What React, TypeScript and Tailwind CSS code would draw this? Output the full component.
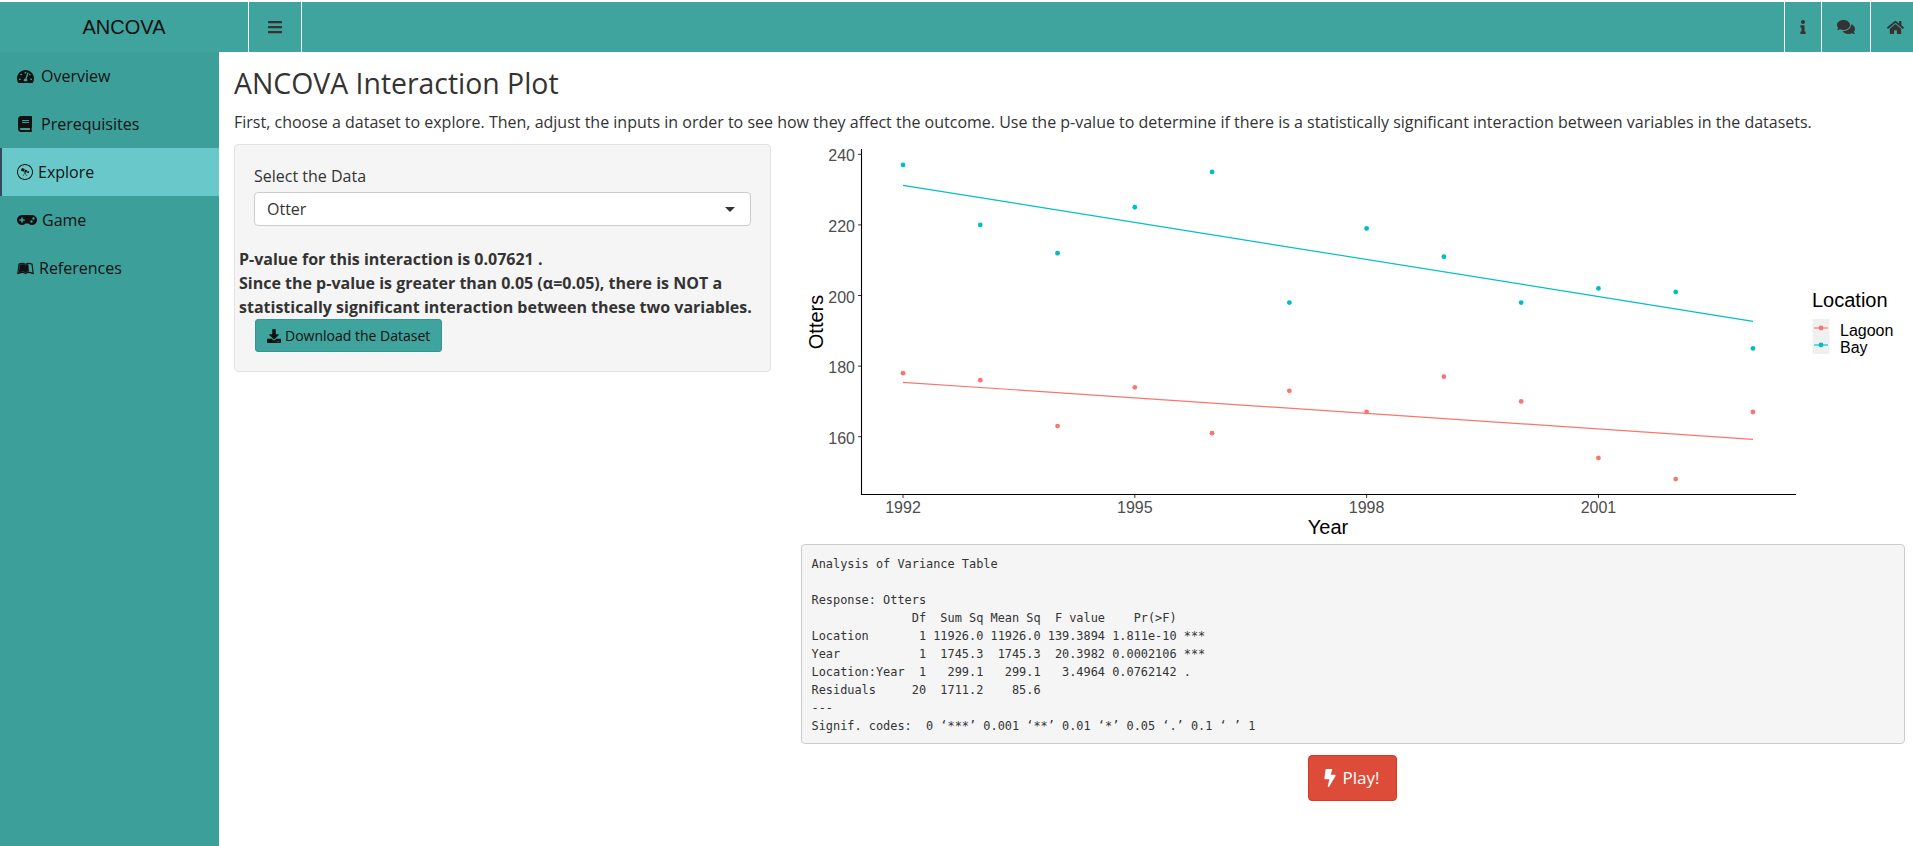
import { FaTachometerAlt, FaBook, FaWpexplorer, FaGamepad, FaLeanpub, FaBars, FaInfo, FaComments, FaHome, FaDownload, FaBolt } from 'react-icons/fa'
import type { ReactNode } from 'react'

const bay = [237, 220, 212, 225, 235, 198, 219, 211, 198, 202, 201, 185]
const lagoon = [178, 176, 163, 174, 161, 173, 167, 177, 170, 154, 148, 167]

const xOf = (year: number) => 903 + (year - 1992) * 77.27
const yOf = (v: number) => 436.7 - (v - 160) * 3.53

const anova = `Analysis of Variance Table

Response: Otters
              Df  Sum Sq Mean Sq  F value    Pr(>F)    
Location       1 11926.0 11926.0 139.3894 1.811e-10 ***
Year           1  1745.3  1745.3  20.3982 0.0002106 ***
Location:Year  1   299.1   299.1   3.4964 0.0762142 .  
Residuals     20  1711.2    85.6                       
---
Signif. codes:  0 ‘***’ 0.001 ‘**’ 0.01 ‘*’ 0.05 ‘.’ 0.1 ‘ ’ 1`

function NavItem({ icon, label, gap, active }: { icon: ReactNode; label: string; gap: string; active?: boolean }) {
  return (
    <div
      className={`flex h-12 items-center text-[16px] text-[#111] ${gap} ${
        active ? 'border-l-2 border-[#34495e] bg-[#69c9ca] pl-[15px]' : 'pl-[17px]'
      }`}
    >
      {icon}
      <span>{label}</span>
    </div>
  )
}

function TopIcon({ width, children }: { width: string; children: ReactNode }) {
  return <div className={`flex h-full items-center justify-center border-l border-white text-[#333] ${width}`}>{children}</div>
}

function Plot() {
  return (
    <svg viewBox="801 144 1104 400" className="block h-[400px] w-[1104px]" fontFamily="'Liberation Sans', sans-serif">
      <path d="M861.5 149V494.5H1796" fill="none" stroke="#000" strokeWidth="1.1" />
      {[160, 180, 200, 220, 240].map((v) => (
        <g key={v}>
          <path d={`M858 ${yOf(v)}H861`} stroke="#333" strokeWidth="1" />
          <text x="855" y={yOf(v) + 7} textAnchor="end" fontSize="16" fill="#4d4d4d">{v}</text>
        </g>
      ))}
      {[1992, 1995, 1998, 2001].map((y) => (
        <g key={y}>
          <path d={`M${xOf(y)} 495V498`} stroke="#333" strokeWidth="1" />
          <text x={xOf(y)} y="512.5" textAnchor="middle" fontSize="16" fill="#4d4d4d">{y}</text>
        </g>
      ))}
      <line x1="903" y1="185.3" x2="1753" y2="321.3" stroke="#00bfc4" strokeWidth="1.2" />
      <line x1="903" y1="382.3" x2="1753" y2="439.3" stroke="#f8766d" strokeWidth="1.2" />
      {bay.map((v, i) => (
        <circle key={i} cx={xOf(1992 + i)} cy={yOf(v)} r="2.4" fill="#00bfc4" />
      ))}
      {lagoon.map((v, i) => (
        <circle key={i} cx={xOf(1992 + i)} cy={yOf(v)} r="2.4" fill="#f8766d" />
      ))}
      <text x="823" y="322" textAnchor="middle" fontSize="20" fill="#000" transform="rotate(-90 823 322)">Otters</text>
      <text x="1328" y="534" textAnchor="middle" fontSize="20" fill="#000">Year</text>
      <text x="1812" y="307" fontSize="20" fill="#000">Location</text>
      <rect x="1812.5" y="319" width="17" height="35" fill="#f0f0f0" />
      <path d="M1814 328H1828" stroke="#f8766d" strokeWidth="1.1" />
      <circle cx="1821" cy="328" r="2.4" fill="#f8766d" />
      <path d="M1814 345H1828" stroke="#00bfc4" strokeWidth="1.1" />
      <circle cx="1821" cy="345" r="2.4" fill="#00bfc4" />
      <text x="1840" y="336" fontSize="16" fill="#000">Lagoon</text>
      <text x="1840" y="353" fontSize="16" fill="#000">Bay</text>
    </svg>
  )
}

export default function App() {
  return (
    <div className="flex h-screen flex-col overflow-hidden bg-white pt-[2px] font-['Open_Sans',sans-serif] text-[16px] text-[#333]">
      <header className="flex h-[50px] shrink-0 items-center bg-[#3fa39e]">
        <div className="w-[248px] text-center font-['Liberation_Sans',sans-serif] text-[20px] text-[#111]">ANCOVA</div>
        <TopIcon width="w-[54px] border-r">
          <FaBars size={16} />
        </TopIcon>
        <div className="flex-1" />
        <TopIcon width="w-[37px]">
          <FaInfo size={14} />
        </TopIcon>
        <TopIcon width="w-[49px]">
          <FaComments size={18} />
        </TopIcon>
        <TopIcon width="w-[43px]">
          <div className="ml-[6px]">
            <FaHome size={17} />
          </div>
        </TopIcon>
      </header>

      <div className="flex min-h-0 flex-1">
        <nav className="w-[219px] shrink-0 bg-[#3d9f9a]">
          <NavItem icon={<FaTachometerAlt size={17} />} label="Overview" gap="gap-[7px]" />
          <NavItem icon={<FaBook size={16} className="mr-px" />} label="Prerequisites" gap="gap-[7px]" />
          <NavItem icon={<FaWpexplorer size={16} />} label="Explore" gap="gap-[5px]" active />
          <NavItem icon={<FaGamepad size={20} />} label="Game" gap="gap-[5px]" />
          <NavItem icon={<FaLeanpub size={17} />} label="References" gap="gap-[5px]" />
        </nav>

        <main className="min-w-0 flex-1 pl-[15px]">
          <h2 className="mt-[15px] text-[28.4px] leading-[33px]">ANCOVA Interaction Plot</h2>
          <p className="mt-[11px] leading-[22px]">
            First, choose a dataset to explore. Then, adjust the inputs in order to see how they affect the outcome. Use the p-value to determine if there is a statistically significant interaction between variables in the datasets.
          </p>

          <div className="mt-[11px] flex items-start">
            <section className="h-[228px] w-[537px] rounded border border-[#e3e3e3] bg-[#f5f5f5] pl-[4px] pr-[14px] pt-[20px]">
              <div className="pl-[15px] pr-[5px]">
                <label className="block leading-[22px]">Select the Data</label>
                <div className="mt-[5px] flex h-[34px] items-center justify-between rounded border border-[#ccc] bg-white pl-[12px] pr-[15px]">
                  <span>Otter</span>
                  <span className="h-0 w-0 border-x-[5px] border-t-[5px] border-x-transparent border-t-[#333]" />
                </div>
              </div>
              <div className="mt-[21px] font-bold leading-[24px]">
                P-value for this interaction is 0.07621 .
                <br />
                Since the p-value is greater than 0.05 (α=0.05), there is NOT a statistically significant interaction between these two variables.
              </div>
              <button className="ml-[16px] flex h-[33px] items-center gap-[4px] rounded-[3px] border border-[#399390] bg-[#3fa39e] px-[11px] text-[14px] text-[#111]">
                <FaDownload size={14} />
                Download the Dataset
              </button>
            </section>

            <div className="ml-[30px] w-[1104px]">
              <Plot />
              <pre className="h-[200px] overflow-hidden rounded border border-[#ccc] bg-[#f5f5f5] px-[9.5px] pt-[9.5px] font-['DejaVu_Sans_Mono',monospace] text-[11.9px] leading-[18px] text-[#333]">
                {anova}
              </pre>
              <div className="mt-[11px] flex justify-center pr-[2px]">
                <button className="flex h-[46px] w-[89px] items-center justify-center gap-[4px] rounded-[4px] border border-[#d73925] bg-[#dd4b39] pr-[4px] text-[17px] text-white">
                  <FaBolt size={18} />
                  Play!
                </button>
              </div>
            </div>
          </div>
        </main>
      </div>
    </div>
  )
}
